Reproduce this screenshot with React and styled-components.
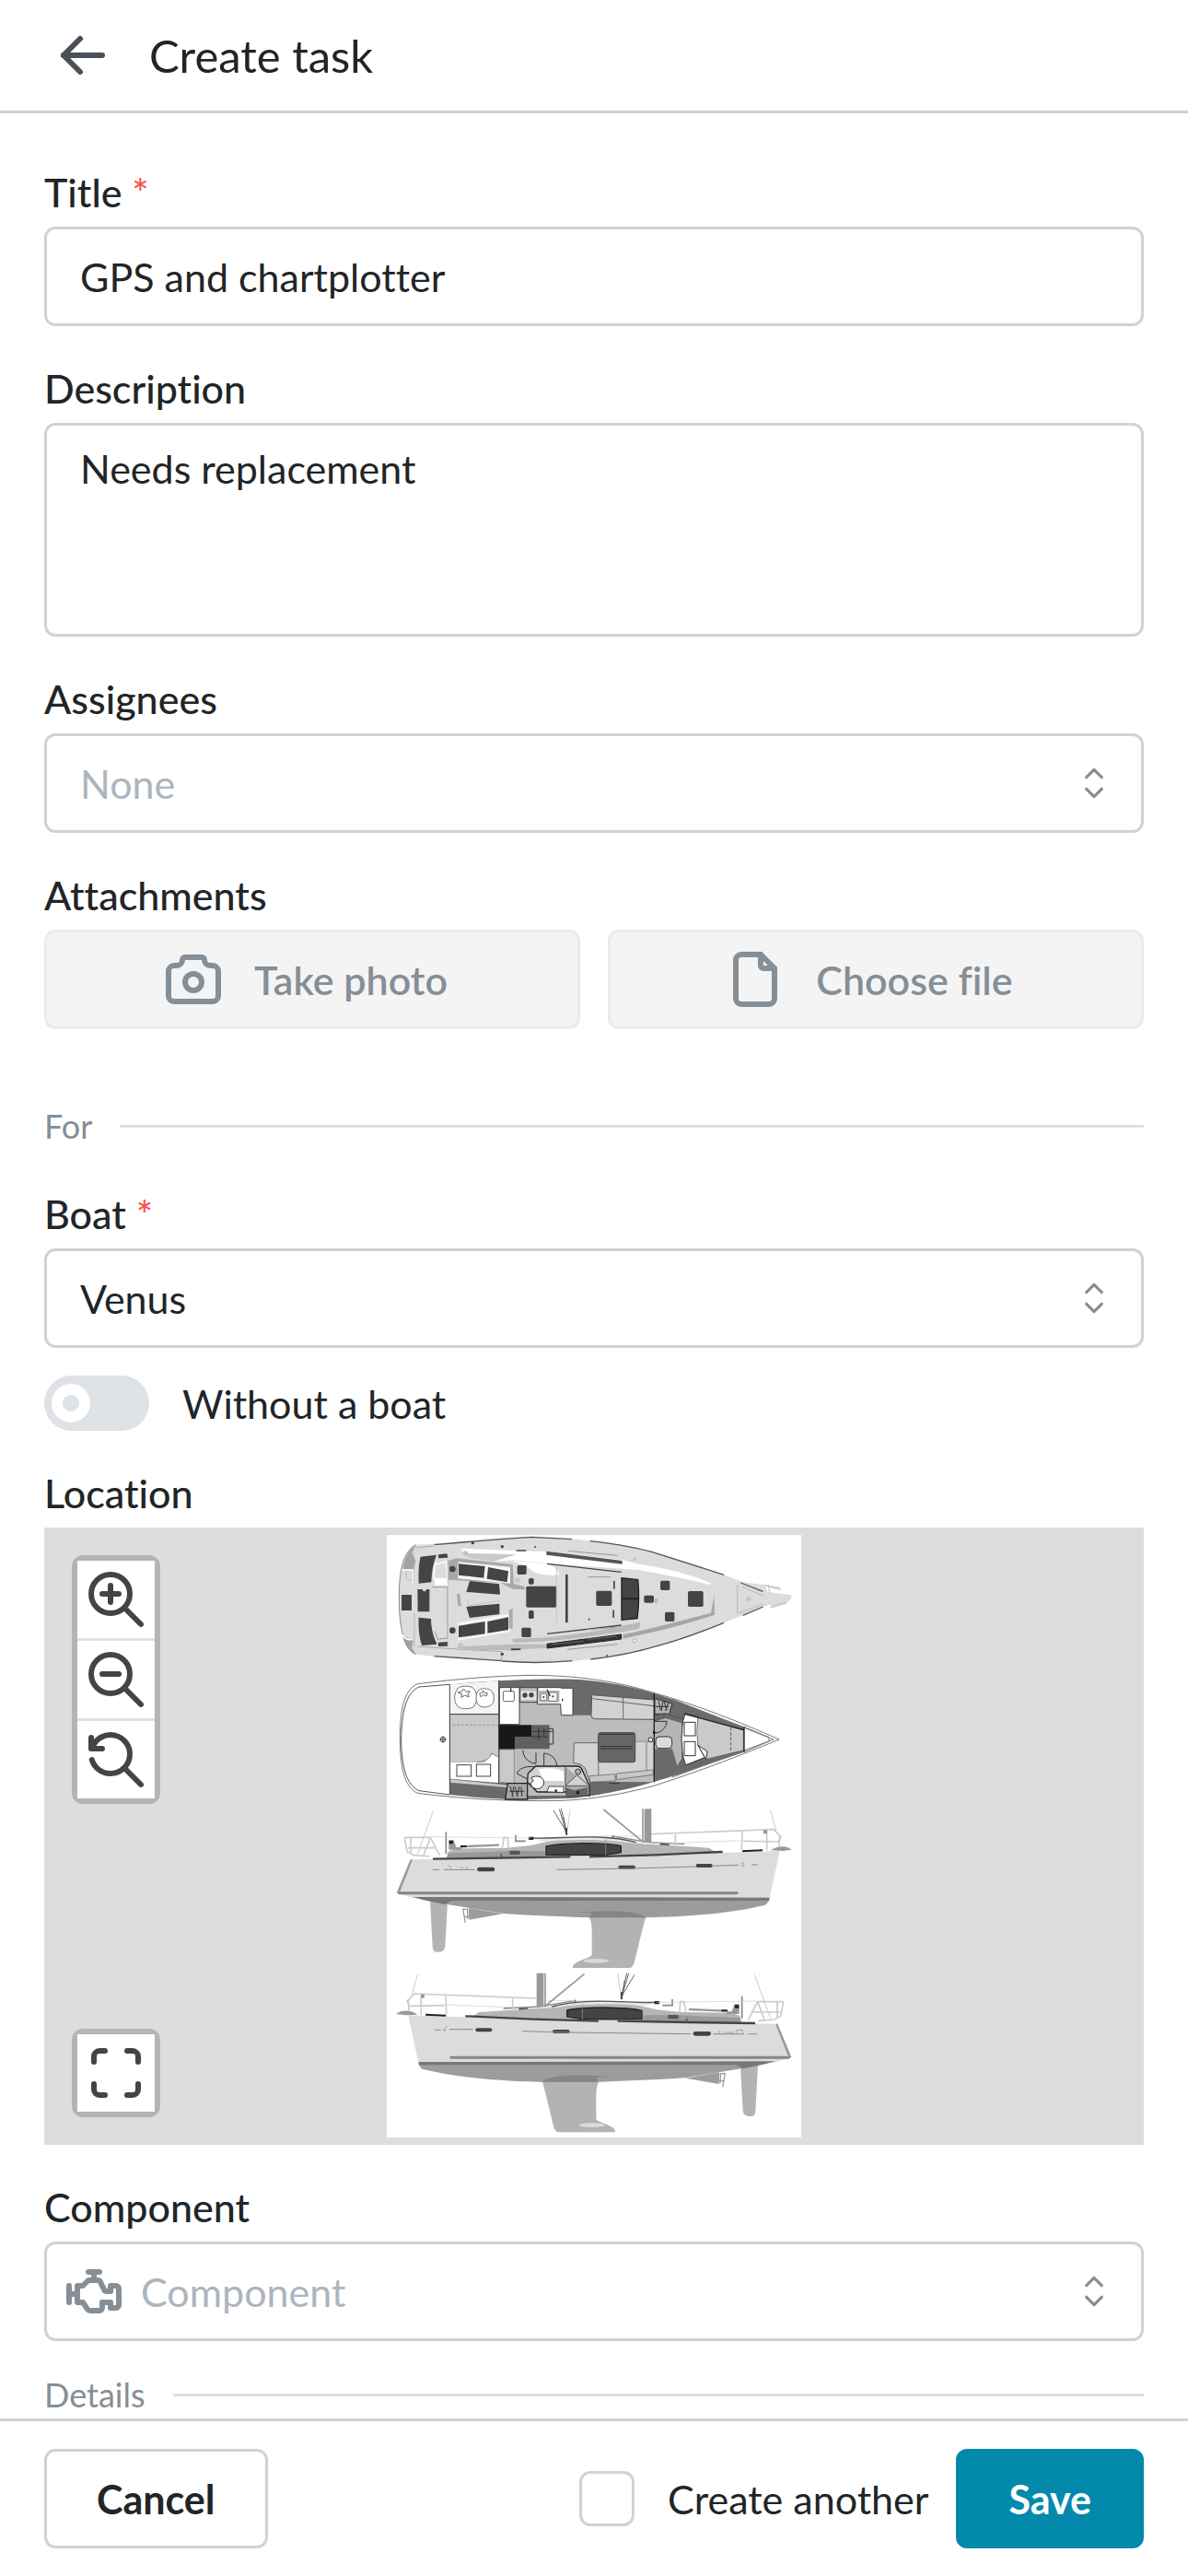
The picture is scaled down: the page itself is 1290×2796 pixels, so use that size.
import React, { useState } from "react"
import styled, { createGlobalStyle } from "styled-components"
import {
  TbArrowLeft,
  TbCamera,
  TbEngine,
  TbFile,
  TbMaximize,
  TbZoomIn,
  TbZoomOut,
  TbZoomReset,
} from "react-icons/tb"

const GlobalStyle = createGlobalStyle`
  *,
  *::before,
  *::after {
    box-sizing: border-box;
  }

  body {
    margin: 0;
    background: #fff;
    color: #212527;
    font-family: Lato, "Liberation Sans", sans-serif;
    font-size: 43px;
    font-variant-ligatures: none;
  }

  button,
  input,
  select,
  textarea {
    font: inherit;
    font-variant-ligatures: none;
    color: inherit;
    margin: 0;
    outline: none;
  }
`

const Page = styled.div`
  display: flex;
  flex-direction: column;
  height: 100vh;
`

const Header = styled.header`
  display: flex;
  flex: none;
  align-items: center;
  gap: 36px;
  height: 123px;
  padding: 0 54px;
  border-bottom: 3px solid #d0d1d8;
`

const BackButton = styled.button`
  display: flex;
  padding: 0;
  border: 0;
  background: none;
  color: #495057;
`

const PageTitle = styled.h1`
  margin: 0;
  font-size: 49px;
  font-weight: 400;
`

const Form = styled.form`
  display: flex;
  flex-direction: column;
  flex: 1;
  min-height: 0;
`

const Fields = styled.main`
  display: flex;
  flex-direction: column;
  flex: 1;
  min-height: 0;
  gap: 40px;
  padding: 58px 48px 0;
  overflow-y: auto;
  scrollbar-width: none;

  > * {
    flex: none;
  }
`

const Field = styled.div`
  display: flex;
  flex-direction: column;
`

const Label = styled.label`
  padding-bottom: 10px;
  line-height: 55px;
  font-weight: 500;
`

const Required = styled.span`
  color: #fa5252;
`

const TextInput = styled.input`
  width: 100%;
  height: 108px;
  padding: 0 36px;
  border: 3px solid #cfd3d6;
  border-radius: 12px;
  background: #fff;
`

const TextArea = styled.textarea`
  display: block;
  width: 100%;
  height: 232px;
  padding: 15px 36px;
  border: 3px solid #cfd3d6;
  border-radius: 12px;
  background: #fff;
  line-height: 63px;
  resize: none;
`

const SelectFrame = styled.div`
  display: flex;
  align-items: center;
  gap: 15px;
  height: 108px;
  padding-left: ${(props) => (props.$withIcon ? "15px" : "36px")};
  padding-right: 24px;
  border: 3px solid #cfd3d6;
  border-radius: 12px;
  color: #868e96;
`

const NativeSelect = styled.select`
  flex: 1;
  min-width: 0;
  height: 100%;
  padding: 0;
  border: 0;
  background: none;
  appearance: none;
  color: ${(props) => (props.$empty ? "#adb5bd" : "#212527")};
`

const ButtonPair = styled.div`
  display: grid;
  grid-template-columns: 1fr 1fr;
  gap: 30px;
`

const AttachButton = styled.button`
  display: flex;
  align-items: center;
  justify-content: center;
  gap: 30px;
  height: 108px;
  padding: 0 54px 0 36px;
  border: 3px solid #e9ebec;
  border-radius: 12px;
  background: #f4f4f5;
  color: #868e96;
  font-weight: 600;
`

const Divider = styled.div`
  display: flex;
  align-items: center;
  gap: 30px;
  margin-top: ${(props) => props.$spaceTop ?? "0"};
  color: #868e96;
  font-size: 36px;
  line-height: 56px;

  &::after {
    content: "";
    flex: 1;
    height: 3px;
    background: #dee0e2;
  }
`

const BoatGroup = styled.div`
  display: flex;
  flex-direction: column;
  gap: 30px;
`

const CheckLabel = styled.label`
  display: flex;
  align-items: center;
  gap: 36px;
`

const Switch = styled.input`
  display: flex;
  align-items: center;
  width: 114px;
  height: 60px;
  padding: 0 8px;
  border-radius: 30px;
  background: #dee2e6;
  appearance: none;

  &::before {
    content: "";
    width: 42px;
    height: 42px;
    border: 12px solid #fff;
    border-radius: 50%;
  }

  &:checked {
    justify-content: flex-end;
    background: #0389ac;
  }
`

const Checkbox = styled.input`
  width: 60px;
  height: 60px;
  border: 3px solid #cfd3d6;
  border-radius: 12px;
  background: #fff;
  appearance: none;

  &:checked {
    background: #0389ac;
  }
`

const LocationMap = styled.div`
  position: relative;
  display: flex;
  justify-content: center;
  height: 670px;
  padding: 8px;
  background: #ddd;
`

const MapControls = styled.div`
  position: absolute;
  left: 30px;
  ${(props) => props.$edge}: 30px;
  display: flex;
  flex-direction: column;
  gap: 3px;
  padding: 6px;
  border-radius: 12px;
  background: #b4b4b4;
`

const MapButton = styled.button`
  display: flex;
  align-items: center;
  justify-content: center;
  width: 84px;
  height: 84px;
  padding: 0;
  border: 0;
  background: #fff;
  color: #444;

  & + & {
    box-shadow: 0 -3px 0 #dee2e6;
  }
`

const Footer = styled.footer`
  display: flex;
  flex: none;
  align-items: center;
  gap: 30px;
  padding: 30px 48px;
  border-top: 3px solid #ced4d6;
`

const FooterButton = styled.button`
  height: 108px;
  padding: 0 54px;
  border: 3px solid ${(props) => (props.$primary ? "#0389ac" : "#cfd3d6")};
  border-radius: 12px;
  background: ${(props) => (props.$primary ? "#0389ac" : "#fff")};
  color: ${(props) => (props.$primary ? "#fff" : "#212527")};
  font-weight: 700;
`

const Spacer = styled.div`
  flex: 1;
`

const Chevrons = () => (
  <svg width="54" height="54" viewBox="0 0 15 15" fill="none" aria-hidden="true">
    <path
      d="M5.2 5.75 7.5 3.45l2.3 2.3M5.2 9.25l2.3 2.3 2.3-2.3"
      stroke="currentColor"
      strokeWidth="0.9"
      strokeLinecap="round"
      strokeLinejoin="round"
    />
  </svg>
)

const SelectField = ({ id, label, required, icon, value, empty }) => (
  <Field>
    <Label htmlFor={id}>
      {label} {required && <Required>*</Required>}
    </Label>
    <SelectFrame $withIcon={Boolean(icon)}>
      {icon}
      <NativeSelect id={id} $empty={empty}>
        <option>{value}</option>
      </NativeSelect>
      <Chevrons />
    </SelectFrame>
  </Field>
)

const DeckPlan = () => (
  <g transform="translate(-30 -36)">
    <path
      d="M70 240C70 150 84 88 125 68L180 65C300 54 400 45 500 43L635 49L700 56C790 66 850 80 920 98L1128 165L1190 190L1310 205L1316 216L1262 200L1270 222L1350 232L1346 244L1330 262L1285 274L1280 262L1190 298L1128 322C1050 355 980 380 910 398C830 418 760 434 690 441L635 446C560 453 500 454 440 449L185 432L125 425C84 412 70 330 70 240Z"
      fill="#dcdcdc"
    />
    <path d="M125 70C104 82 90 104 82 148L118 150L124 120L112 96ZM82 362C88 390 100 412 125 423L112 404L116 380Z" fill="#a3a3a3" />
    <path d="M125 68C84 88 70 150 70 240C70 330 84 412 125 425" fill="none" stroke="#888" strokeWidth="3" />
    <path d="M78 150H116V200M82 362C88 376 100 378 112 376" fill="none" stroke="#fff" strokeWidth="5" />
    <path d="M93 152V176L102 184H114M118 92V200M120 290V400" fill="none" stroke="#aaa" strokeWidth="2" />

    {/* toe rail */}
    <path
      d="M185 68L400 50L500 43L633 50M692 56C780 66 850 78 912 97L1128 166M185 431L405 446M635 446C560 453 480 453 405 447M694 441C770 432 850 416 912 397C990 377 1060 350 1128 322M1183 192L1255 220M1190 298L1256 270"
      fill="none"
      stroke="#555"
      strokeWidth="4"
    />
    <path d="M125 78L180 72M129 399L260 408L404 416V448M260 403L455 412" fill="none" stroke="#aaa" strokeWidth="3" />

    {/* coamings and coach roof */}
    <path d="M272 80L455 88L550 90L800 118L844 130C920 142 1010 160 1088 194L1080 198C1000 178 920 162 850 150L550 128L440 118L378 122L450 100L280 96Z" fill="#fff" />
    <path d="M280 96L450 100L378 122L300 112Z" fill="#c9c9c9" />
    <path d="M258 112L440 132L444 196L478 204L480 214L440 212L400 192L230 182V120Z" fill="#a8a8a8" />
    <path d="M432 120L540 128C575 136 590 150 592 166C540 172 500 160 486 136Z" fill="#fff" />
    <path d="M262 124L432 140V194L262 178ZM262 322L432 292V352L262 380Z" fill="#f5f5f5" />
    <path d="M440 374C600 372 700 352 856 320L852 342C700 368 560 386 440 386Z" fill="#b9b9b9" />
    <path d="M800 360C900 340 1000 312 1086 290L1096 232L1098 296C1020 322 920 350 800 374Z" fill="#a6a6a6" />
    <path d="M260 400L430 392L550 392V404L440 410L290 412Z" fill="#bcbcbc" />
    <path d="M428 280L440 276V342L428 340Z" fill="#aaa" />
    <path d="M552 130L794 157M552 358L794 330" stroke="#444" strokeWidth="4" />
    <path d="M620 88L782 103M618 409L782 392M686 173H760M684 344L775 337" stroke="#999" strokeWidth="3" />
    <path d="M550 89L797 120V131L550 101Z" fill="#555" />
    <path d="M552 391L794 360V375L552 405Z" fill="#333" stroke="#222" strokeWidth="3" />
    <path d="M566 392L672 382M680 376L780 366" stroke="#555" strokeWidth="5" />

    {/* transom, helm seats */}
    <g fill="#444">
      <rect x="78" y="231" width="33" height="51" />
      <path d="M140 107L192 101C180 130 176 160 175 190L134 194C133 160 134 130 140 107Z" />
      <path d="M130 213H146C150 224 156 222 159 213H169V286H131Z" />
      <path d="M134 305L174 309C174 340 182 370 194 392L144 396C136 370 132 340 134 305Z" />
      <path d="M198 100L226 97L229 110L198 112ZM198 386L228 384V398L198 399Z" />
      <path d="M264 130L350 138L346 176L264 167ZM360 141L426 154L422 190L356 179ZM264 332L350 318V358L264 370ZM358 318L426 304V345L358 356Z" />
      <path d="M300 186L396 196L399 230L289 222ZM289 270L397 260V294L300 306Z" />
      <rect x="484" y="203" width="99" height="69" rx="5" />
      <rect x="712" y="218" width="51" height="49" rx="5" />
      <rect x="1011" y="219" width="50" height="51" rx="5" />
      <rect x="455" y="135" width="30" height="30" rx="5" />
      <rect x="492" y="177" width="17" height="20" rx="5" />
      <rect x="492" y="282" width="17" height="27" rx="5" />
      <rect x="469" y="338" width="31" height="31" rx="5" />
      <rect x="921" y="185" width="31" height="31" rx="5" />
      <rect x="868" y="233" width="32" height="24" rx="5" />
      <rect x="936" y="287" width="31" height="31" rx="5" />
      <rect x="612" y="164" width="8" height="158" rx="3" />
      <rect x="768" y="186" width="5" height="26" />
      <rect x="766" y="281" width="5" height="25" />
      <path d="M452 85H484V89H452ZM435 406H466V411H435Z" />
      <circle cx="244" cy="147" r="10" />
      <circle cx="244" cy="347" r="10" />
      <circle cx="406" cy="74" r="5" />
      <circle cx="406" cy="424" r="5" />
      <circle cx="513" cy="75" r="3" />
      <circle cx="310" cy="62" r="5" />
      <circle cx="689" cy="311" r="3" />
      <circle cx="747" cy="429" r="3" />
    </g>
    <path d="M795 176L848 182C852 220 851 270 846 308L795 313Z" fill="#444" stroke="#1f1f1f" strokeWidth="4" />
    <path d="M795 244H850" stroke="#1f1f1f" strokeWidth="5" />
    <path d="M186 132L222 124L228 178H184Z" fill="none" stroke="#fff" strokeWidth="4" />
    <rect x="186" y="178" width="42" height="22" fill="#fff" />
    <path d="M178 206H228V372L196 376L186 350" fill="none" stroke="#999" strokeWidth="3" />
    <path d="M258 228H268L272 268H262Z" fill="#a8a8a8" />
    <path d="M296 244V266L396 250M229 116V196M229 320V400M583 142V320" fill="none" stroke="#c4c4c4" strokeWidth="3" />
    <path d="M1172 198V292L1256 262M1186 204L1256 234M1258 200L1312 214M1272 198L1278 226M1280 272L1330 256" fill="none" stroke="#bbb" strokeWidth="3" />
    <g fill="#c4c4c4">
      <circle cx="286" cy="96" r="8" />
      <circle cx="456" cy="184" r="8" />
      <circle cx="270" cy="396" r="8" />
      <circle cx="837" cy="115" r="6" />
      <circle cx="1209" cy="244" r="8" />
    </g>
    <circle cx="837" cy="380" r="6" fill="#eee" stroke="#999" strokeWidth="2" />
    <path d="M905 243V256H911V243" fill="none" stroke="#888" strokeWidth="2" />
  </g>
)

const CabinPlan = () => (
  <g transform="translate(-30 429)">
    <path
      d="M73 240C72 150 84 75 130 56C260 40 400 28 520 28C660 30 780 48 900 85C1040 125 1180 180 1308 237C1180 290 1050 340 900 388C800 415 700 432 600 436C440 440 270 430 130 412C84 390 74 320 73 240Z"
      fill="#fff"
      stroke="#777"
      strokeWidth="3"
    />
    <path d="M235 58C400 42 560 38 660 42C780 52 860 72 960 106L1194 196V278L1000 345L901 375C800 405 720 418 640 428L490 433C400 432 300 424 235 417Z" fill="#6a6a6a" />
    <path d="M77 240C78 150 92 85 135 66L235 58M77 240C78 320 92 385 135 404L235 417" fill="none" stroke="#555" strokeWidth="3" />
    <path d="M1194 196L1275 230V243L1194 278M960 106L1290 237L960 360" fill="none" stroke="#777" strokeWidth="3" />

    {/* saloon floor */}
    <path d="M462 70H636V158H696L901 172V376L690 374L690 420H490L447 376L395 378V270H447V190L462 186Z" fill="#bcbcbc" />

    {/* aft cabin */}
    <path d="M235 58L395 46V153H235Z" fill="#f4f4f4" />
    <rect x="237" y="155" width="157" height="156" fill="#cacaca" />
    <path d="M237 311H350L372 284L394 294V378L237 366Z" fill="#fff" />
    <path d="M237 366L448 388V396L237 378Z" fill="#cfcfcf" stroke="#777" strokeWidth="2" />
    <path d="M324 311C350 308 366 300 372 282L392 294" fill="none" stroke="#555" strokeWidth="2" />
    <path d="M245 190H392" stroke="#777" strokeWidth="2" strokeDasharray="8 6" />
    <g fill="none" stroke="#444" strokeWidth="3">
      <rect x="258" y="320" width="47" height="37" />
      <rect x="322" y="318" width="46" height="39" />
      <path d="M237 155H395M235 58V417M395 44V270M395 270V380" />
    </g>
    <g fill="#fff" stroke="#777" strokeWidth="3">
      <path d="M262 70C245 90 248 125 268 134C285 140 305 136 314 130C328 110 325 76 306 66C290 62 272 62 262 70Z" />
      <path d="M328 78C316 98 320 122 336 130C352 134 366 130 374 122C384 104 378 80 364 74C350 70 338 70 328 78Z" />
    </g>
    <path d="M262 84L276 80L280 72L288 82L300 80L294 90L298 98L284 94L272 100L276 90ZM332 88L342 84L344 78L350 86L358 86L354 96L346 92L336 98Z" fill="none" stroke="#666" strokeWidth="3" />

    {/* galley */}
    <path d="M397 68H462V188H397ZM598 70H636V158H598L596 122H520L522 68H598Z" fill="#fff" stroke="#444" strokeWidth="3" />
    <rect x="409" y="80" width="36" height="33" rx="4" fill="#fff" stroke="#666" strokeWidth="3" />
    <rect x="464" y="68" width="56" height="48" fill="#bcbcbc" stroke="#444" strokeWidth="3" />
    <rect x="467" y="80" width="50" height="28" fill="#e3e3e3" />
    <circle cx="480" cy="93" r="8" fill="#444" />
    <circle cx="501" cy="92" r="8" fill="#444" />
    <path d="M524 78H592V116H524Z" fill="#b5b5b5" />
    <rect x="531" y="88" width="20" height="22" rx="4" fill="#f5f5f5" stroke="#555" strokeWidth="2" />
    <rect x="557" y="84" width="28" height="28" rx="4" fill="#f5f5f5" stroke="#555" strokeWidth="2" />
    <circle cx="541" cy="99" r="3" fill="#333" />
    <circle cx="571" cy="97" r="3" fill="#333" />
    <path d="M552 74L562 96M434 70V82M602 104V112" stroke="#333" strokeWidth="4" />

    {/* companionway */}
    <path d="M447 228H502V190H560V268H447Z" fill="#606060" />
    <path d="M395 190H502V228H447V268H395Z" fill="#181818" />
    <path d="M504 211H572M525 200V240M542 200V226M556 202H572V252H556M504 228H556" fill="none" stroke="#333" strokeWidth="3" />
    <path d="M397 270H445V380L397 376Z" fill="#cacaca" stroke="#777" strokeWidth="2" />

    {/* settees and table */}
    <path d="M698 92L901 108V172L706 170Q696 168 696 158Z" fill="#d2d2d2" stroke="#555" strokeWidth="3" />
    <path d="M700 104L900 128M800 98V170M684 90L900 102M780 86L940 106" fill="none" stroke="#666" strokeWidth="3" />
    <path d="M640 248H720V370L690 372L676 330Q664 314 638 314Z" fill="#d2d2d2" stroke="#666" strokeWidth="3" />
    <path d="M720 310H838V244H900V340L720 366Z" fill="#d2d2d2" stroke="#777" strokeWidth="2" />
    <path d="M876 246V336M690 356L774 350V372L692 376ZM778 348L898 336V352L778 368Z" fill="#c6c6c6" stroke="#555" strokeWidth="2" />
    <rect x="719" y="215" width="120" height="96" rx="6" fill="#666" stroke="#4a4a4a" strokeWidth="3" />
    <path d="M724 220H834M726 260H830M726 267H830" stroke="#333" strokeWidth="3" />
    <path d="M755 380H788" stroke="#333" strokeWidth="3" />

    {/* heads */}
    <path d="M490 348L515 324H650Q664 324 668 340L690 388V420L612 408H520L488 376Z" fill="#d2d2d2" stroke="#222" strokeWidth="4" />
    <path d="M524 334C560 326 600 334 606 342V372H540Z" fill="#fff" />
    <path d="M612 326V388L650 352L684 384M612 388H684V418L616 426Z" fill="#aaa" stroke="#555" strokeWidth="3" />
    <circle cx="653" cy="342" r="9" fill="#aaa" stroke="#444" strokeWidth="3" />
    <path d="M614 396L640 404L680 396V422H616Z" fill="#666" stroke="#444" strokeWidth="2" />
    <circle cx="652" cy="410" r="6" fill="#222" />
    <path d="M500 362C520 350 542 360 542 378C540 396 520 402 506 394C496 384 498 376 508 372Z" fill="#fff" stroke="#333" strokeWidth="3" />
    <path d="M552 406L558 390H606V408" fill="#fff" stroke="#444" strokeWidth="3" />
    <circle cx="581" cy="404" r="4" fill="#222" />
    <path d="M424 380H488V432H416Z" fill="#a8a8a8" stroke="#222" strokeWidth="4" />
    <path d="M430 406H478M432 390L442 424M444 390L438 422M448 392L456 424M462 390L454 422M468 392L470 422" stroke="#333" strokeWidth="3" />
    <path d="M474 272C474 296 490 312 516 316V280M542 322V282C566 284 582 300 584 322M510 326C480 322 458 334 454 348L488 366" fill="none" stroke="#333" strokeWidth="3" />

    {/* forward cabin */}
    <path d="M903 178L940 166L990 180V300L976 322L960 268H903Z" fill="#b5b5b5" />
    <path d="M903 104L960 120L950 154H903Z" fill="#b0b0b0" stroke="#333" strokeWidth="3" />
    <path d="M905 130H948M916 112L922 142M930 112L924 144M934 114L942 142M948 116L938 144" stroke="#333" strokeWidth="3" />
    <path d="M903 160L935 152L1000 172M903 176L938 166L990 182" fill="none" stroke="#555" strokeWidth="3" />
    <path d="M903 178L942 178C940 200 925 214 905 216" fill="none" stroke="#333" strokeWidth="3" />
    <rect x="906" y="228" width="53" height="38" rx="12" fill="#dcdcdc" stroke="#333" strokeWidth="3" />
    <path d="M1002 152L1044 164V256L1070 294L1004 320L994 290Q986 236 994 180Z" fill="#fff" stroke="#333" strokeWidth="3" />
    <path d="M1044 164L1192 206V272L1068 302L1044 256Q1036 210 1044 164Z" fill="#cacaca" stroke="#555" strokeWidth="2" />
    <path d="M1044 256L1074 276L1070 302Z" fill="#fff" stroke="#333" strokeWidth="3" />
    <path d="M1151 198V276" stroke="#555" strokeWidth="3" strokeDasharray="10 6" />
    <g fill="#fff" stroke="#333" strokeWidth="3">
      <rect x="999" y="181" width="36" height="44" />
      <rect x="999" y="244" width="36" height="46" />
    </g>
    <path d="M901 86V376M1194 196V278M1000 154L1192 206" fill="none" stroke="#222" strokeWidth="4" />
    <circle cx="889" cy="238" r="7" fill="#fff" stroke="#222" strokeWidth="3" />
    <path d="M897 208L908 216L898 220Z" fill="#111" />

    <path d="M202 237H224M213 226V248M205 237A8 8 0 0 1 221 237A8 8 0 0 1 205 237" fill="none" stroke="#444" strokeWidth="3" />
  </g>
)

const SideView = ({ transform, children }) => (
  <g transform={transform}>
    {/* rudder, propeller, keel */}
    <path d="M171 312L228 316L220 462Q218 478 202 479H190Q180 478 179 462Z" fill="#b3b3b3" />
    <path d="M296 336L408 355L298 374Z" fill="#9c9c9c" />
    <path d="M278 338L286 384M276 340H292M282 364H298M292 338L294 372" stroke="#999" strokeWidth="4" />
    <path d="M684 356H876C860 410 850 462 836 514Q832 530 820 531H636Q634 524 644 516C664 502 698 498 698 486V410Q698 376 684 356Z" fill="#b3b3b3" />
    <ellipse cx="712" cy="508" rx="42" ry="7" fill="#dadada" />

    {/* hull */}
    <path d="M115 300H1276Q1276 320 1262 326C1180 346 1080 358 970 364L876 367H690C600 364 500 360 410 354L240 326C200 320 150 310 115 300Z" fill="#9c9c9c" />
    <path d="M652 350C700 346 760 344 800 347C840 350 865 358 876 367H690Q700 356 694 352Z" fill="#858585" />
    <path d="M107 178L400 174L700 170L1000 160L1310 150L1277 304H120L62 287Z" fill="#dcdcdc" />
    <path d="M107 178L114 178L74 280L62 287Z" fill="#999" />
    <path d="M62 283H1172L1176 288L1170 292H70Z" fill="#858585" />
    <path d="M115 300L1276 302V312H240L220 324C180 316 140 308 115 300Z" fill="#777" />

    {/* coach roof */}
    <path d="M225 172L230 152L260 142L420 140L500 132L560 118C640 104 740 104 810 116L860 126L1080 140L1100 154L900 164L400 174Z" fill="#b5b5b5" />
    <path d="M230 158L440 150L545 150L548 166L410 172H225Z" fill="#999" />
    <path d="M500 108C600 106 680 100 720 102C780 104 860 122 880 128L820 124C740 110 620 112 540 120Z" fill="#e8e8e8" />
    <path d="M500 108C600 112 720 90 842 122" fill="none" stroke="#555" strokeWidth="4" />
    <path d="M766 102L882 122L1000 128" fill="none" stroke="#888" strokeWidth="4" />
    <path d="M549 135C580 128 620 126 670 125C720 125 770 128 793 134V155L744 163H549Z" fill="#444" stroke="#252525" strokeWidth="4" />
    <path d="M743 112V164" stroke="#999" strokeWidth="2" />
    <rect x="430" y="149" width="34" height="13" rx="3" fill="#555" />
    <path d="M180 176L400 173L628 169M690 169L905 163L1124 153" fill="none" stroke="#444" strokeWidth="7" />
    <path d="M1188 151L1254 148" stroke="#222" strokeWidth="6" />
    <path d="M1280 148C1300 134 1330 130 1349 146L1320 150Z" fill="#999" />
    <path d="M272 136L396 131" stroke="#999" strokeWidth="7" />
    <path d="M270 135H290" stroke="#222" strokeWidth="6" />
    <path d="M232 114H248L256 138H274V146H232Z" fill="#999" />
    <path d="M233 122H246M492 109H508" stroke="#222" strokeWidth="10" />
    <path d="M450 98V118H482M223 88V160" fill="none" stroke="#888" strokeWidth="5" />
    <path d="M920 128L950 130M766 100V110M403 160V176" stroke="#555" strokeWidth="5" />

    {/* rails */}
    <g fill="none" stroke="#ccc" strokeWidth="5">
      <path d="M88 106H172L202 164M88 106L96 152L118 164L170 168M108 106V158M98 140H190M172 106L150 164" />
      <path d="M406 140L412 106H424L426 140M970 96V138M1188 84L1186 148M1268 84V148M1310 98L1308 138" />
      <path d="M892 95L1290 80L1314 104L1306 120L1192 118" />
      <path d="M172 104L500 108M720 102H860M970 124L1190 116" strokeWidth="2" />
      <path d="M182 18L130 160M1280 18L1298 84M628 14L616 96" strokeWidth="3" />
    </g>
    <rect x="1257" y="82" width="12" height="12" fill="#999" />

    {/* mast and stays */}
    <path d="M869 13H892V123H869Z" fill="#999" />
    <path d="M864 13V120M736 15L866 122" fill="none" stroke="#999" strokeWidth="5" />
    <path d="M573 18L614 86M592 14L614 86M598 12L618 98M606 40L614 98" fill="none" stroke="#666" strokeWidth="3" />
    <path d="M610 76L618 74V98H614Z" fill="#444" />

    {/* portholes */}
    <rect x="324" y="203" width="58" height="14" rx="7" fill="#444" />
    <rect x="784" y="197" width="56" height="12" rx="6" fill="#444" />
    <rect x="1037" y="192" width="54" height="12" rx="6" fill="#444" />
    <g fill="none" stroke="#888" strokeWidth="3">{children}</g>
  </g>
)

const BoatDrawing = () => (
  <svg height="100%" viewBox="0 0 1350 1962" role="img" aria-label="Boat plans">
    <rect width="1350" height="1962" fill="#fff" />
    <DeckPlan />
    <CabinPlan />
    <SideView transform="translate(-30 879)">
      <path d="M180 211H202M216 211H316M583 211L784 208L1037 201M1091 199L1176 196M1218 195H1238" />
      <path d="M228 198Q240 198 238 208M270 202L280 206M290 200V208M1184 190Q1196 186 1190 194Q1200 200 1184 200" strokeWidth="2" />
    </SideView>
    <SideView transform="translate(1380 1414) scale(-1 1)">
      <path d="M174 211H202M216 211H316M390 211L784 206L938 202M1100 196L1176 196M1204 198H1224" />
      <path d="M222 208V198H240V208M250 206H280M296 200V208M1184 186L1196 200H1188" strokeWidth="2" />
    </SideView>
  </svg>
)

const App = () => {
  const [title, setTitle] = useState("GPS and chartplotter")
  const [description, setDescription] = useState("Needs replacement")

  return (
    <Page>
      <GlobalStyle />
      <Header>
        <BackButton type="button" aria-label="Back">
          <TbArrowLeft size={72} />
        </BackButton>
        <PageTitle>Create task</PageTitle>
      </Header>
      <Form onSubmit={(e) => e.preventDefault()}>
        <Fields>
          <Field>
            <Label htmlFor="title">
              Title <Required>*</Required>
            </Label>
            <TextInput
              id="title"
              value={title}
              onChange={(e) => setTitle(e.target.value)}
            />
          </Field>
          <Field>
            <Label htmlFor="description">Description</Label>
            <TextArea
              id="description"
              value={description}
              onChange={(e) => setDescription(e.target.value)}
            />
          </Field>
          <SelectField id="assignees" label="Assignees" value="None" empty />
          <Field>
            <Label as="div">Attachments</Label>
            <ButtonPair>
              <AttachButton type="button">
                <TbCamera size={72} />
                Take photo
              </AttachButton>
              <AttachButton type="button">
                <TbFile size={72} />
                Choose file
              </AttachButton>
            </ButtonPair>
          </Field>

          <Divider $spaceTop="37px">For</Divider>
          <BoatGroup>
            <SelectField id="boat" label="Boat" value="Venus" required />
            <CheckLabel>
              <Switch type="checkbox" role="switch" />
              Without a boat
            </CheckLabel>
          </BoatGroup>
          <Field>
            <Label as="div">Location</Label>
            <LocationMap>
              <BoatDrawing />
              <MapControls $edge="top">
                <MapButton type="button" aria-label="Zoom in">
                  <TbZoomIn size={72} />
                </MapButton>
                <MapButton type="button" aria-label="Zoom out">
                  <TbZoomOut size={72} />
                </MapButton>
                <MapButton type="button" aria-label="Reset zoom">
                  <TbZoomReset size={72} />
                </MapButton>
              </MapControls>
              <MapControls $edge="bottom">
                <MapButton type="button" aria-label="Full screen">
                  <TbMaximize size={72} />
                </MapButton>
              </MapControls>
            </LocationMap>
          </Field>
          <SelectField
            id="component"
            label="Component"
            value="Component"
            icon={<TbEngine size={72} />}
            empty
          />
          <Divider $spaceTop="-10px">Details</Divider>
        </Fields>
        <Footer>
          <FooterButton type="button">Cancel</FooterButton>
          <Spacer />
          <CheckLabel>
            <Checkbox type="checkbox" />
            Create another
          </CheckLabel>
          <FooterButton type="submit" $primary>
            Save
          </FooterButton>
        </Footer>
      </Form>
    </Page>
  )
}

export default App
